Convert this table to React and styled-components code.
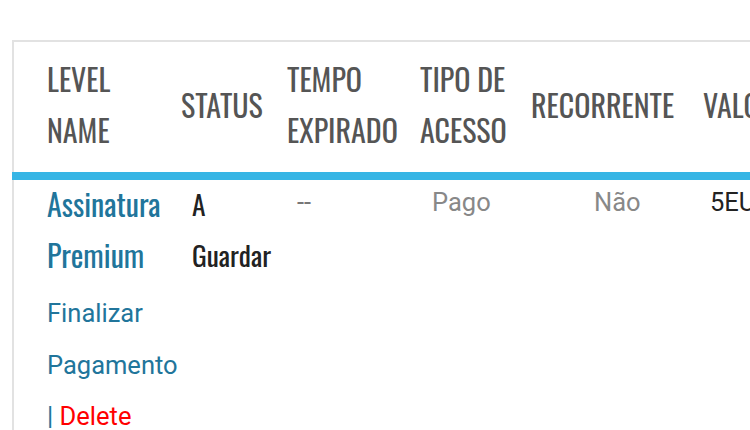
import styled, { createGlobalStyle } from "styled-components"

const Global = createGlobalStyle`
  body {
    margin: 0;
    background: #fff;
    overflow: hidden;
  }
`

const COLUMNS = "162px 106px 133px 111px 172px 1fr"

const Table = styled.div`
  margin: 40px 0 0 12px;
  width: 900px;
  border-top: 2px solid #e2e2e2;
  border-left: 2px solid #e2e2e2;
`

const HeadRow = styled.div`
  display: grid;
  grid-template-columns: ${COLUMNS};
  align-items: center;
  margin-left: -2px;
  padding: 11px 0 17px 2px;
  height: 102px;
  border-bottom: 8px solid #36b5e5;
`

const Th = styled.div`
  padding-left: ${(p) => p.$pad}px;
  font-family: "Oswald", "Roboto Condensed", sans-serif;
  font-size: 30px;
  line-height: 51px;
  color: #555;
  text-transform: uppercase;
`

const BodyRow = styled.div`
  display: grid;
  grid-template-columns: ${COLUMNS};
  align-items: start;
`

const Td = styled.div`
  padding-left: ${(p) => p.$pad}px;
  font-family: Roboto, "Liberation Sans", sans-serif;
  font-size: 25.5px;
  line-height: 51px;
  margin-top: ${(p) => p.$shift || 0}px;
  color: ${(p) => p.$color || "#222"};
`

const Title = styled.a`
  display: block;
  font-family: "Oswald", "Roboto Condensed", sans-serif;
  font-size: 30px;
  line-height: 51px;
  margin-top: -2px;
  color: #21759b;
  text-decoration: none;
`

const Status = styled.div`
  font-family: "Oswald", "Roboto Condensed", sans-serif;
  font-size: 27.5px;
  line-height: 51px;
  margin-top: -2px;
  color: #222;
`

const Actions = styled.div`
  margin-top: 8px;
  line-height: 51.5px;
  color: #21759b;
`

const Link = styled.a`
  color: ${(p) => (p.$danger ? "#ff0000" : "#21759b")};
  text-decoration: none;
`

const headers = [
  { lines: ["Level", "Name"], pad: 33 },
  { lines: ["Status"], pad: 5 },
  { lines: ["Tempo", "Expirado"], pad: 5 },
  { lines: ["Tipo de", "Acesso"], pad: 5 },
  { lines: ["Recorrente"], pad: 5 },
  { lines: ["Valor"], pad: 5 },
]

export default function App() {
  return (
    <>
      <Global />
      <Table>
        <HeadRow>
          {headers.map((h) => (
            <Th key={h.lines.join(" ")} $pad={h.pad}>
              {h.lines.map((l) => (
                <div key={l}>{l}</div>
              ))}
            </Th>
          ))}
        </HeadRow>
        <BodyRow>
          <Td $pad={33}>
            <Title href="#">Assinatura Premium</Title>
            <Actions>
              <Link href="#">Finalizar Pagamento</Link>
              <div>
                | <Link href="#" $danger>Delete</Link>
              </div>
            </Actions>
          </Td>
          <Td $pad={16}>
            <Status>A Guardar</Status>
          </Td>
          <Td $pad={15} $shift={-3} $color="#777">--</Td>
          <Td $pad={17} $shift={-3} $color="#888">Pago</Td>
          <Td $pad={68} $shift={-3} $color="#888">Não</Td>
          <Td $pad={12} $shift={-3}>5EUR</Td>
        </BodyRow>
      </Table>
    </>
  )
}
